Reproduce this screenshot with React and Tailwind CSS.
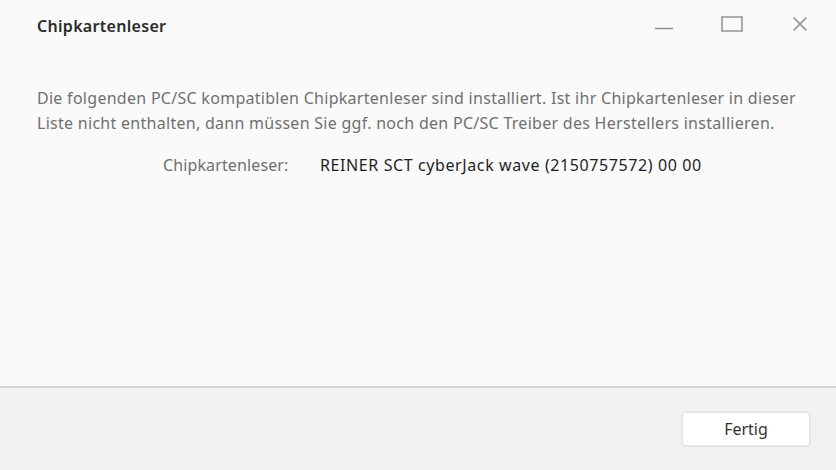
export default function App() {
  return (
    <div
      className="w-[836px] h-[470px] flex flex-col bg-[#fafafa] text-[#333]"
      style={{ fontFamily: '"Noto Sans", "Open Sans", sans-serif' }}
    >
      <div className="h-[386px] flex flex-col">
        <div className="h-[52px] flex items-center pl-[37px]">
          <h1 className="text-[16px] tracking-[0.3px] font-semibold text-[#2b2b2b] flex-1">Chipkartenleser</h1>
          <div className="flex items-center h-full pr-[2px] pb-[4px]">
            <button className="w-[68px] h-full flex items-center justify-center">
              <svg width="20" height="20" viewBox="0 0 20 20">
                <path d="M1 14.5h18" stroke="#8a8a8a" strokeWidth="1.4" />
              </svg>
            </button>
            <button className="w-[68px] h-full flex items-center justify-center">
              <svg width="22" height="16" viewBox="0 0 22 16">
                <rect x="1" y="1" width="20" height="14" fill="none" stroke="#8a8a8a" strokeWidth="1.4" />
              </svg>
            </button>
            <button className="w-[68px] h-full flex items-center justify-center">
              <svg width="16" height="16" viewBox="0 0 16 16">
                <path d="M1.5 1.5l13 13M14.5 1.5l-13 13" stroke="#8a8a8a" strokeWidth="1.5" />
              </svg>
            </button>
          </div>
        </div>
        <div className="pl-[37px] pr-[20px] pt-[34px]">
          <p className="text-[16px] leading-[25px] tracking-[0.28px] text-[#707070]">
            Die folgenden PC/SC kompatiblen Chipkartenleser sind installiert. Ist ihr Chipkartenleser in dieser
            Liste nicht enthalten, dann müssen Sie ggf. noch den PC/SC Treiber des Herstellers installieren.
          </p>
          <div className="flex mt-[17px] text-[16px] leading-[25px]">
            <span className="ml-[126px] w-[157px] tracking-[0.12px] text-[#707070]">Chipkartenleser:</span>
            <span className="text-[#1f1f1f] tracking-[0.6px]">REINER SCT cyberJack wave (2150757572) 00 00</span>
          </div>
        </div>
      </div>
      <div className="flex-1 border-t-2 border-[#d2d6da] bg-[#f2f2f2] flex justify-end items-start pt-[23px] pr-[25px]">
        <button className="w-[130px] h-[36px] bg-white border-2 border-[#e6e6e6] rounded-[5px] text-[16px] text-[#333]">
          Fertig
        </button>
      </div>
    </div>
  );
}
